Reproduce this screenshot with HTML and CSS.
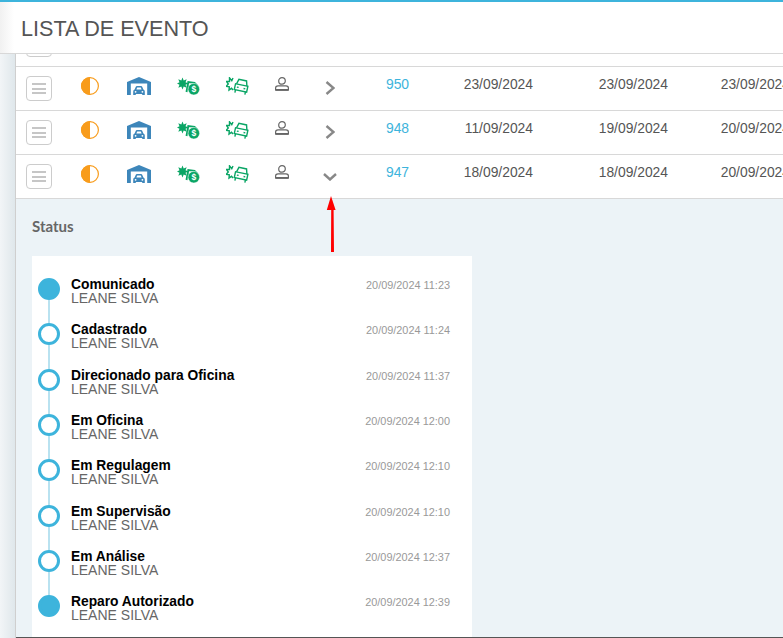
FILE: index.html
```html
<!DOCTYPE html>
<html lang="pt-BR">
<head>
    <meta charset="UTF-8">
    <meta name="viewport" content="width=device-width, initial-scale=1.0">
    <title>Lista de Evento</title>
    <link rel="stylesheet" href="styles.css">
</head>
<body>

<svg class="sprite" aria-hidden="true">
    <symbol id="i-half" viewBox="0 0 18 18">
        <circle cx="9" cy="9" r="8.4" fill="#fff" stroke="#f89c1c" stroke-width="1.2"/>
        <path d="M9 0A9 9 0 0 0 9 18Z" fill="#f89c1c"/>
    </symbol>
    <symbol id="i-garage" viewBox="0 0 24 18">
        <path d="M0 5L12 0L24 5V18H20.2V6.5H3.8V18H0Z" fill="#3d86ba"/>
        <path d="M7.6 12.6L8.8 9.8Q9.1 9 10 9H14Q14.9 9 15.2 9.8L16.4 12.6Q17.8 13 17.8 14.4V18H15.2V17H8.8V18H6.2V14.4Q6.2 13 7.6 12.6Z" fill="#3d86ba"/>
        <path d="M9.4 12.6L10.2 10.5H13.8L14.6 12.6Z" fill="#fff"/>
        <circle cx="8.6" cy="14.8" r=".9" fill="#fff"/>
        <circle cx="15.4" cy="14.8" r=".9" fill="#fff"/>
    </symbol>
    <symbol id="i-money" viewBox="0 0 23 18">
        <polygon points="11.5,6.5 8.5,7.7 9.7,10.7 6.7,9.5 5.5,12.5 4.3,9.5 1.3,10.7 2.5,7.7 0,6.5 2.5,5.3 1.3,2.3 4.3,3.5 5.5,.5 6.7,3.5 9.7,2.3 8.5,5.3" fill="#0aa565"/>
        <path d="M9.5 15L11.3 5L17.5 5.8L20 8.5" fill="none" stroke="#0aa565" stroke-width="1.9"/>
        <path d="M10.5 9.6H15" fill="none" stroke="#0aa565" stroke-width="1.7"/>
        <circle cx="16.8" cy="12.2" r="5.8" fill="#0aa565" stroke="#fff" stroke-width=".5"/>
        <text x="16.8" y="15.2" class="dollar">$</text>
    </symbol>
    <symbol id="i-car" viewBox="0 0 23 19">
        <polyline points="7,1 5.8,3.6 3.5,.8 3.5,4.5 .5,4.5 2.3,7 .3,9.3 3.3,9.8 3,13 5.5,11.3 7,13" fill="none" stroke="#0aa565" stroke-width="1.4"/>
        <g transform="rotate(12 15.5 9)" fill="none" stroke="#0aa565" stroke-width="1.4">
            <path d="M10.2 8L11.6 3H19.4L20.8 8"/>
            <path d="M9.2 8H21.8V14H9.2Z"/>
            <path d="M10.4 14V16.8M20.6 14V16.8"/>
            <path d="M11.2 11H13M18 11H19.8"/>
        </g>
    </symbol>
    <symbol id="i-person" viewBox="0 0 14 14">
        <circle cx="7" cy="3.9" r="3.3" fill="none" stroke="#666" stroke-width="1.2"/>
        <path d="M3 8.8H11Q13.4 8.8 13.4 11V12.6H.6V11Q.6 8.8 3 8.8Z" fill="none" stroke="#666" stroke-width="1.2"/>
        <path d="M.3 13.2H13.7" stroke="#666" stroke-width="1.4"/>
    </symbol>
    <symbol id="i-right" viewBox="0 0 10 14">
        <path d="M1.5 1L8.5 7L1.5 13" fill="none" stroke="#888" stroke-width="2.4"/>
    </symbol>
    <symbol id="i-down" viewBox="0 0 14 8">
        <path d="M1 1L7 6.5L13 1" fill="none" stroke="#888" stroke-width="2.4"/>
    </symbol>
</svg>

<header class="page-header">
    <h1>LISTA DE EVENTO</h1>
</header>

<div class="layout">
    <aside class="side"></aside>

    <main class="content">
        <div class="row row-cut">
            <div class="cell-menu"><button class="menu-btn"><span></span><span></span><span></span></button></div>
        </div>

        <div class="row">
            <div class="cell-menu"><button class="menu-btn"><span></span><span></span><span></span></button></div>
            <svg class="ico ico-half"><use href="#i-half"/></svg>
            <svg class="ico ico-garage"><use href="#i-garage"/></svg>
            <svg class="ico ico-money"><use href="#i-money"/></svg>
            <svg class="ico ico-car"><use href="#i-car"/></svg>
            <svg class="ico ico-person"><use href="#i-person"/></svg>
            <svg class="ico ico-right"><use href="#i-right"/></svg>
            <a class="num">950</a>
            <span class="date">23/09/2024</span>
            <span class="date">23/09/2024</span>
            <span class="date">23/09/2024</span>
        </div>

        <div class="row">
            <div class="cell-menu"><button class="menu-btn"><span></span><span></span><span></span></button></div>
            <svg class="ico ico-half"><use href="#i-half"/></svg>
            <svg class="ico ico-garage"><use href="#i-garage"/></svg>
            <svg class="ico ico-money"><use href="#i-money"/></svg>
            <svg class="ico ico-car"><use href="#i-car"/></svg>
            <svg class="ico ico-person"><use href="#i-person"/></svg>
            <svg class="ico ico-right"><use href="#i-right"/></svg>
            <a class="num">948</a>
            <span class="date">11/09/2024</span>
            <span class="date">19/09/2024</span>
            <span class="date">20/09/2024</span>
        </div>

        <div class="row">
            <div class="cell-menu"><button class="menu-btn"><span></span><span></span><span></span></button></div>
            <svg class="ico ico-half"><use href="#i-half"/></svg>
            <svg class="ico ico-garage"><use href="#i-garage"/></svg>
            <svg class="ico ico-money"><use href="#i-money"/></svg>
            <svg class="ico ico-car"><use href="#i-car"/></svg>
            <svg class="ico ico-person"><use href="#i-person"/></svg>
            <svg class="ico ico-down"><use href="#i-down"/></svg>
            <a class="num">947</a>
            <span class="date">18/09/2024</span>
            <span class="date">18/09/2024</span>
            <span class="date">20/09/2024</span>
        </div>

        <section class="detail">
            <h2>Status</h2>
            <ul class="timeline">
                <li class="event done">
                    <div class="marker"><i class="dot"></i><i class="line"></i></div>
                    <div class="who"><b>Comunicado</b><span>LEANE SILVA</span></div>
                    <time>20/09/2024 11:23</time>
                </li>
                <li class="event">
                    <div class="marker"><i class="dot"></i><i class="line"></i></div>
                    <div class="who"><b>Cadastrado</b><span>LEANE SILVA</span></div>
                    <time>20/09/2024 11:24</time>
                </li>
                <li class="event">
                    <div class="marker"><i class="dot"></i><i class="line"></i></div>
                    <div class="who"><b>Direcionado para Oficina</b><span>LEANE SILVA</span></div>
                    <time>20/09/2024 11:37</time>
                </li>
                <li class="event">
                    <div class="marker"><i class="dot"></i><i class="line"></i></div>
                    <div class="who"><b>Em Oficina</b><span>LEANE SILVA</span></div>
                    <time>20/09/2024 12:00</time>
                </li>
                <li class="event">
                    <div class="marker"><i class="dot"></i><i class="line"></i></div>
                    <div class="who"><b>Em Regulagem</b><span>LEANE SILVA</span></div>
                    <time>20/09/2024 12:10</time>
                </li>
                <li class="event">
                    <div class="marker"><i class="dot"></i><i class="line"></i></div>
                    <div class="who"><b>Em Supervisão</b><span>LEANE SILVA</span></div>
                    <time>20/09/2024 12:10</time>
                </li>
                <li class="event">
                    <div class="marker"><i class="dot"></i><i class="line"></i></div>
                    <div class="who"><b>Em Análise</b><span>LEANE SILVA</span></div>
                    <time>20/09/2024 12:37</time>
                </li>
                <li class="event done">
                    <div class="marker"><i class="dot"></i></div>
                    <div class="who"><b>Reparo Autorizado</b><span>LEANE SILVA</span></div>
                    <time>20/09/2024 12:39</time>
                </li>
            </ul>
        </section>

        <svg class="red-arrow" viewBox="0 0 12 57"><path d="M5 0L9.6 14H7.6L8 56H5L5.2 14H.8Z" fill="#f00"/></svg>
    </main>
</div>

</body>
</html>
```

FILE: styles.css
```css
* {
    margin: 0;
    padding: 0;
    box-sizing: border-box;
}
html, body {
    height: 100%;
}
body {
    display: flex;
    flex-direction: column;
    overflow: hidden;
    background: #fff;
    border-top: 2px solid #3db4dc;
    font-family: "Liberation Sans", Arial, sans-serif;
    color: #555;
}
.sprite {
    display: none;
}
.dollar {
    font: bold 8.5px "Liberation Sans", Arial, sans-serif;
    fill: #fff;
    text-anchor: middle;
}

/* header */
.page-header {
    flex: none;
    height: 52px;
    padding: 14px 0 0 21px;
    background: linear-gradient(to right, #f1f1f1, #fff 14px);
    border-bottom: 1px solid #d8d8d8;
}
.page-header h1 {
    font-size: 21.6px;
    font-weight: normal;
    line-height: 25px;
    color: #555;
}

.layout {
    flex: 1;
    display: flex;
    min-height: 0;
}
.side {
    flex: none;
    width: 16px;
    background: linear-gradient(to right, #f2f5f7, #dfe7eb);
    border-right: 1px solid #cfcfcf;
}
.content {
    flex: 1;
    min-width: 0;
    position: relative;
    display: flex;
    flex-direction: column;
    overflow: hidden;
    border-bottom: 1px solid #555;
}

/* table rows */
.row {
    flex: none;
    display: grid;
    grid-template-columns: 48px 52px 46px 52px 46px 44px 52px 83px 94px 135px 122px;
    align-items: start;
    justify-items: center;
    width: 774px;
    height: 44px;
    border-bottom: 1px solid #d8d8d8;
    background: #fff;
}
.row-cut {
    margin-top: -31px;
}
.cell-menu {
    justify-self: start;
    padding: 9px 0 0 10px;
}
.menu-btn {
    display: flex;
    flex-direction: column;
    justify-content: center;
    align-items: center;
    gap: 2.2px;
    width: 26px;
    height: 25px;
    background: #fff;
    border: 1px solid #ccc;
    border-radius: 4px;
}
.menu-btn span {
    width: 14px;
    height: 2px;
    background: #c6c6c6;
}
.ico {
    display: block;
}
.ico-half {
    width: 18px;
    height: 18px;
    margin-top: 10px;
}
.ico-garage {
    width: 24px;
    height: 18px;
    margin-top: 10px;
}
.ico-money {
    width: 23px;
    height: 18px;
    margin-top: 10px;
}
.ico-car {
    width: 23px;
    height: 19px;
    margin-top: 10px;
}
.ico-person {
    width: 14px;
    height: 14px;
    margin-top: 10px;
}
.ico-right {
    width: 10px;
    height: 14px;
    margin-top: 14px;
}
.ico-down {
    width: 14px;
    height: 8px;
    margin-top: 18px;
}
.num {
    margin-top: 7px;
    font-size: 13.9px;
    line-height: 20px;
    color: #3db4dc;
}
.date {
    justify-self: end;
    margin-top: 7px;
    font-size: 13.85px;
    line-height: 20px;
}

/* status panel */
.detail {
    flex: 1;
    padding: 18px 16px 0;
    background: #ecf3f7;
}
.detail h2 {
    margin-bottom: 21px;
    font-family: Lato, sans-serif;
    font-size: 15px;
    font-weight: bold;
    line-height: 18px;
    color: #666;
}
.timeline {
    width: 440px;
    padding: 22px 22px 0 6px;
    background: #fff;
    list-style: none;
}
.event {
    display: flex;
    height: 45.33px;
}
.marker {
    flex: none;
    display: flex;
    flex-direction: column;
    align-items: center;
    width: 22px;
    margin-right: 11px;
}
.dot {
    flex: none;
    width: 22px;
    height: 22px;
    background: #fff;
    border: 3px solid #3db4dc;
    border-radius: 50%;
}
.done .dot {
    background: #3db4dc;
}
.line {
    flex: 1;
    width: 2px;
    background: #b9e2f0;
}
.who {
    flex: 1;
    margin-top: -1px;
    font-size: 14px;
    line-height: 14px;
}
.who b {
    display: block;
    padding-top: 2px;
    font-size: 13.8px;
    line-height: 12px;
    color: #000;
}
.who span {
    display: block;
    color: #666;
}
.event time {
    font-size: 10.9px;
    line-height: 14px;
    color: #999;
}

/* arrow drawn over the page */
.red-arrow {
    position: absolute;
    left: 310px;
    top: 142px;
    width: 12px;
    height: 57px;
}
```
